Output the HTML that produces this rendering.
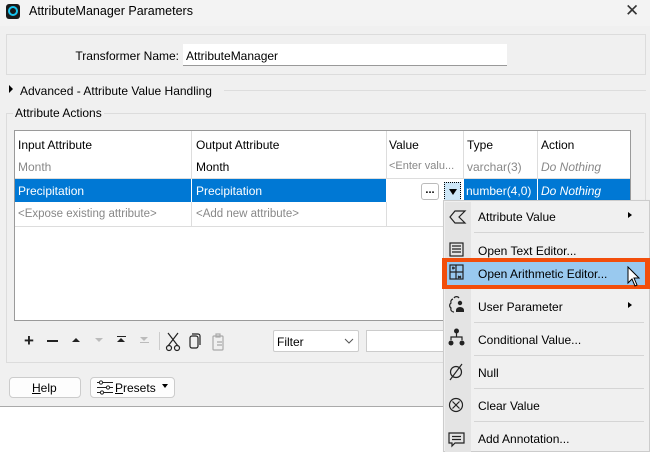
<!DOCTYPE html>
<html><head><style>
*{box-sizing:border-box;margin:0;padding:0}
body{width:650px;height:452px;background:#fff;font-family:"Liberation Sans",sans-serif;font-size:12px;color:#000;position:relative;overflow:hidden}
.a{position:absolute}
.t{white-space:nowrap}
</style></head><body>
<div class="a" style="left:0;top:0;width:650px;height:407px;background:#f0f0f0;border-bottom:1px solid #aaa"></div>
<div class="a" style="left:0;top:0;width:650px;height:26px;background:#f3f3f3"></div>
<div class="a" style="left:6px;top:4px;width:14px;height:15px;background:#1a1a1a;border-radius:3px"></div>
<div class="a" style="left:8px;top:6px;width:10px;height:10px;border:2px solid #18c5f0;border-radius:50%"></div>
<div class="a t" style="left:29px;top:4px;font-size:12.5px">AttributeManager Parameters</div>
<div class="a t" style="left:625px;top:1px;font-size:17px;color:#333">✕</div>

<div class="a" style="left:6px;top:34px;width:640px;height:41px;border:1px solid #dcdcdc"></div>
<div class="a t" style="right:471px;top:49px">Transformer Name:</div>
<div class="a" style="left:183px;top:44px;width:324px;height:22px;background:#fff;border-bottom:1px solid #999"></div>
<div class="a t" style="left:186px;top:49px">AttributeManager</div>

<div class="a" style="left:9px;top:85px;width:0;height:0;border-left:4px solid #000;border-top:4px solid transparent;border-bottom:4px solid transparent"></div>
<div class="a t" style="left:20px;top:84px">Advanced - Attribute Value Handling</div>
<div class="a" style="left:224px;top:90px;width:422px;height:1px;background:#ddd"></div>

<div class="a" style="left:6px;top:113px;width:640px;height:250px;border:1px solid #dcdcdc"></div>
<div class="a t" style="left:13px;top:106px;background:#f0f0f0;padding:0 2px">Attribute Actions</div>

<div class="a" style="left:14px;top:130px;width:617px;height:191px;background:#fff;border:1px solid #9a9a9a"></div>
<div class="a" style="left:15px;top:178px;width:615px;height:1px;background:#ddd"></div>
<div class="a" style="left:15px;top:226px;width:615px;height:1px;background:#ddd"></div>
<div class="a" style="left:191px;top:131px;width:1px;height:95px;background:#ddd"></div>
<div class="a" style="left:386px;top:131px;width:1px;height:95px;background:#ddd"></div>
<div class="a" style="left:463px;top:131px;width:1px;height:72px;background:#ddd"></div>
<div class="a" style="left:537px;top:131px;width:1px;height:72px;background:#ddd"></div>
<div class="a" style="left:15px;top:179px;width:615px;height:23px;background:#0078d4"></div>
<div class="a" style="left:191px;top:179px;width:1px;height:23px;background:#fff"></div>
<div class="a" style="left:386px;top:179px;width:77px;height:23px;background:#fff"></div>
<div class="a" style="left:463px;top:179px;width:1px;height:23px;background:#fff"></div>
<div class="a" style="left:537px;top:179px;width:1px;height:23px;background:#fff"></div>

<div class="a t" style="left:18px;top:138px">Input Attribute</div>
<div class="a t" style="left:196px;top:138px">Output Attribute</div>
<div class="a t" style="left:389px;top:138px">Value</div>
<div class="a t" style="left:467px;top:138px">Type</div>
<div class="a t" style="left:541px;top:138px">Action</div>
<div class="a t" style="left:18px;top:160px;color:#888">Month</div>
<div class="a t" style="left:196px;top:160px">Month</div>
<div class="a t" style="left:389px;top:160px;color:#888;font-size:11px;width:74px;overflow:hidden">&lt;Enter valu...</div>
<div class="a t" style="left:467px;top:160px;color:#888">varchar(3)</div>
<div class="a t" style="left:541px;top:160px;color:#888;font-style:italic">Do Nothing</div>
<div class="a t" style="left:18px;top:184px;color:#fff">Precipitation</div>
<div class="a t" style="left:196px;top:184px;color:#fff">Precipitation</div>
<div class="a" style="left:421px;top:183px;width:18px;height:17px;border:1px solid #bbb;border-radius:3px;background:#fff;font-size:11px;text-align:center;line-height:12px;font-weight:bold">...</div>
<div class="a" style="left:444px;top:182px;width:17px;height:19px;border:1px dotted #000;background:#cde6f7"></div>
<div class="a" style="left:449px;top:189px;border-top:6px solid #000;border-left:4px solid transparent;border-right:4px solid transparent"></div>
<div class="a t" style="left:466px;top:184px;color:#fff">number(4,0)</div>
<div class="a t" style="left:541px;top:184px;color:#fff;font-style:italic">Do Nothing</div>
<div class="a t" style="left:18px;top:208px;color:#888;font-size:11.5px">&lt;Expose existing attribute&gt;</div>
<div class="a t" style="left:196px;top:208px;color:#888;font-size:11.5px">&lt;Add new attribute&gt;</div>

<div class="a t" style="left:24px;top:331px;font-size:17px;font-weight:bold;color:#222">+</div>
<div class="a" style="left:47px;top:340px;width:11px;height:2px;background:#222"></div>
<div class="a" style="left:72px;top:338px;border-bottom:4px solid #222;border-left:4px solid transparent;border-right:4px solid transparent"></div>
<div class="a" style="left:95px;top:338px;border-top:4px solid #bbb;border-left:4px solid transparent;border-right:4px solid transparent"></div>
<div class="a" style="left:117px;top:336px;width:9px;height:1px;background:#222"></div>
<div class="a" style="left:117px;top:338px;border-bottom:4px solid #222;border-left:4px solid transparent;border-right:4px solid transparent"></div>
<div class="a" style="left:140px;top:337px;border-top:4px solid #bbb;border-left:4px solid transparent;border-right:4px solid transparent"></div>
<div class="a" style="left:140px;top:342px;width:9px;height:1px;background:#bbb"></div>
<div class="a" style="left:159px;top:332px;width:1px;height:18px;background:#ccc"></div>
<svg class="a" style="left:165px;top:332px" width="64" height="20"><g fill="none" stroke="#222" stroke-width="1.2"><path d="M3 1 L13 14 M13 1 L3 14"/><circle cx="4" cy="16" r="2.5"/><circle cx="12" cy="16" r="2.5"/><rect x="25" y="4" width="8" height="12" rx="2"/><path d="M27 2 h6 a2 2 0 0 1 2 2 v9"/></g><g fill="none" stroke="#aaa" stroke-width="1.2"><rect x="48" y="4" width="10" height="14" rx="1"/><rect x="51" y="2" width="4" height="3"/><path d="M52 10 h5 M52 13 h5"/></g></svg>
<div class="a" style="left:273px;top:330px;width:86px;height:22px;background:#fff;border:1px solid #ccc;border-radius:2px"></div>
<div class="a t" style="left:277px;top:335px">Filter</div>
<svg class="a" style="left:344px;top:338px" width="10" height="6"><path d="M1 1 L5 5 L9 1" fill="none" stroke="#555"/></svg>
<div class="a" style="left:366px;top:330px;width:80px;height:22px;background:#fff;border:1px solid #ccc"></div>

<div class="a" style="left:9px;top:377px;width:72px;height:21px;background:#fdfdfd;border:1px solid #ccc;border-radius:4px"></div>
<div class="a t" style="left:32px;top:381px"><u>H</u>elp</div>
<div class="a" style="left:90px;top:377px;width:85px;height:21px;background:#fdfdfd;border:1px solid #ccc;border-radius:4px"></div>
<svg class="a" style="left:96px;top:380px" width="18" height="15"><g stroke="#222" fill="#fff"><path d="M1 2.5h16M1 7.5h16M1 12.5h16"/><circle cx="5" cy="2.5" r="1.6"/><circle cx="12" cy="7.5" r="1.6"/><circle cx="6" cy="12.5" r="1.6"/></g></svg>
<div class="a t" style="left:115px;top:381px"><u>P</u>resets</div>
<div class="a" style="left:162px;top:384px;border-top:4px solid #000;border-left:3px solid transparent;border-right:3px solid transparent"></div>

<!-- menu -->
<div class="a" style="left:443px;top:200px;width:207px;height:252px;background:#f0f0f0;border:1px solid #ccc;box-shadow:2px 2px 3px rgba(0,0,0,.2)"></div>
<div class="a" style="left:445px;top:202px;width:26px;height:250px;background:#e4e4e4"></div>
<div class="a" style="left:474px;top:232px;width:170px;height:1px;background:#d5d5d5"></div>
<div class="a" style="left:474px;top:322px;width:170px;height:1px;background:#d5d5d5"></div>
<div class="a" style="left:474px;top:355px;width:170px;height:1px;background:#d5d5d5"></div>
<div class="a" style="left:474px;top:388px;width:170px;height:1px;background:#d5d5d5"></div>
<div class="a" style="left:474px;top:421px;width:170px;height:1px;background:#d5d5d5"></div>
<div class="a" style="left:442px;top:258px;width:208px;height:31px;background:#f24e0b"></div>
<div class="a" style="left:447px;top:262px;width:198px;height:23px;background:#99c9ef"></div>
<div class="a t" style="left:478px;top:210px">Attribute Value</div>
<div class="a t" style="left:478px;top:244px">Open Text Editor...</div>
<div class="a t" style="left:478px;top:267px">Open Arithmetic Editor...</div>
<div class="a t" style="left:478px;top:300px">User Parameter</div>
<div class="a t" style="left:478px;top:333px">Conditional Value...</div>
<div class="a t" style="left:478px;top:366px">Null</div>
<div class="a t" style="left:478px;top:399px">Clear Value</div>
<div class="a t" style="left:478px;top:432px">Add Annotation...</div>
<div class="a" style="left:628px;top:212px;border-left:4px solid #000;border-top:3px solid transparent;border-bottom:3px solid transparent"></div>
<div class="a" style="left:628px;top:302px;border-left:4px solid #000;border-top:3px solid transparent;border-bottom:3px solid transparent"></div>
<svg class="a" style="left:445px;top:202px" width="30" height="250"><g fill="none" stroke="#222" stroke-width="1.2">
<path d="M20 9 H10 L5 15 L10 21 H20 L14 15 Z"/>
<rect x="5" y="41" width="13" height="13"/><path d="M7 44h9M7 47h9M7 50h9"/>
<rect x="5" y="63" width="13" height="14"/><path d="M11 63v14M5 70h13M7 66h3M8 64.5v3M13 74l3 2M16 74l-3 2"/>
<path d="M9 96 a3 3 0 0 1 5 0 M8 97 a3 3 0 0 0 -2 4 a3 3 0 0 0 0 5 a3 3 0 0 0 3 4"/>
<circle cx="11" cy="170" r="5.5"/><path d="M5 178 L17 162"/>
<circle cx="11" cy="203" r="6.5"/><path d="M7.5 199.5l7 7M14.5 199.5l-7 7"/>
<path d="M4 231h15v10h-9l-3 3v-3H4z"/><path d="M7 234.5h9M7 237.5h9"/>
</g><g fill="#222"><circle cx="15" cy="101" r="2.2"/><path d="M11 108 a4 3 0 0 1 8 0 v2 h-8z"/>
<circle cx="11.5" cy="129" r="2.5"/><circle cx="6" cy="141" r="2.5"/><circle cx="17" cy="141" r="2.5"/></g>
<g fill="none" stroke="#222" stroke-width="1.2"><path d="M11.5 131v4M6 138v-3h11v3"/></g></svg>
<svg class="a" style="left:626px;top:266px" width="16" height="24"><path d="M2 1 V17 L6 13 L9 20 L11 19 L8 12 H13 Z" fill="#fff" stroke="#000"/></svg>
</body></html>
